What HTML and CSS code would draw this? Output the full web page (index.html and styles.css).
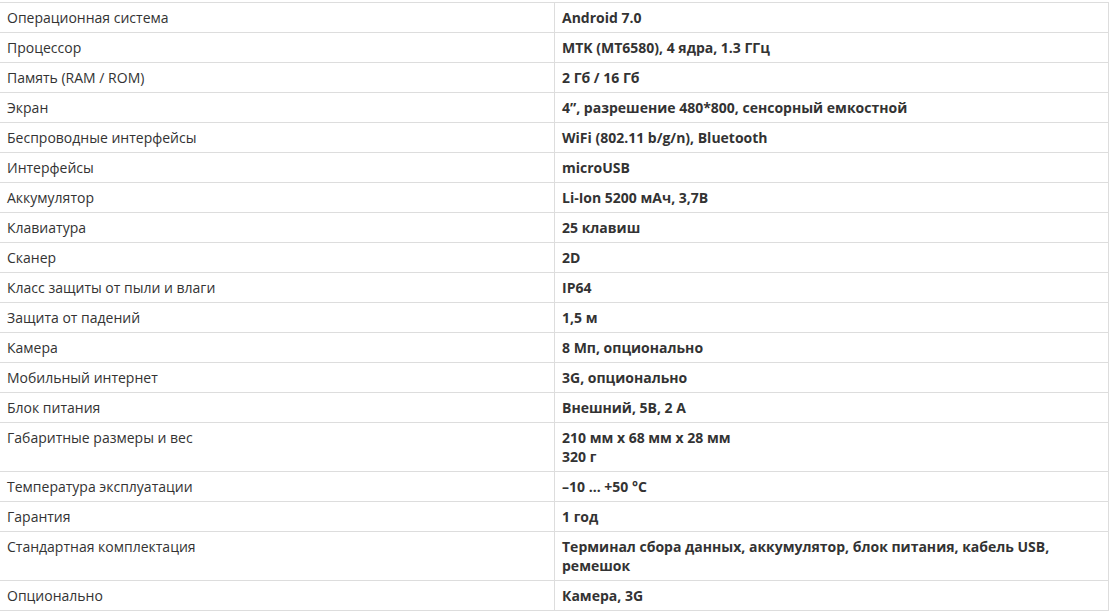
FILE: index.html
```html
<!DOCTYPE html>
<html lang="ru">
<head>
<meta charset="utf-8">
<link rel="stylesheet" href="styles.css">
</head>
<body>
<table class="specs">
<tbody>
<tr><td>Операционная система</td><td>Android 7.0</td></tr>
<tr><td>Процессор</td><td>MTK (MT6580), 4 ядра, 1.3 ГГц</td></tr>
<tr><td>Память (RAM / ROM)</td><td>2 Гб / 16 Гб</td></tr>
<tr><td>Экран</td><td>4”, разрешение 480*800, сенсорный емкостной</td></tr>
<tr><td>Беспроводные интерфейсы</td><td>WiFi (802.11 b/g/n), Bluetooth</td></tr>
<tr><td>Интерфейсы</td><td>microUSB</td></tr>
<tr><td>Аккумулятор</td><td>Li-Ion 5200 мАч, 3,7В</td></tr>
<tr><td>Клавиатура</td><td>25 клавиш</td></tr>
<tr><td>Сканер</td><td>2D</td></tr>
<tr><td>Класс защиты от пыли и влаги</td><td>IP64</td></tr>
<tr><td>Защита от падений</td><td>1,5 м</td></tr>
<tr><td>Камера</td><td>8 Мп, опционально</td></tr>
<tr><td>Мобильный интернет</td><td>3G, опционально</td></tr>
<tr><td>Блок питания</td><td>Внешний, 5В, 2 А</td></tr>
<tr><td>Габаритные размеры и вес</td><td>210 мм х 68 мм х 28 мм<br>320 г</td></tr>
<tr><td>Температура эксплуатации</td><td>–10 … +50 °С</td></tr>
<tr><td>Гарантия</td><td>1 год</td></tr>
<tr><td>Стандартная комплектация</td><td>Терминал сбора данных, аккумулятор, блок питания, кабель USB, ремешок</td></tr>
<tr><td>Опционально</td><td>Камера, 3G</td></tr>
</tbody>
</table>
</body>
</html>
```
FILE: styles.css
```css
html, body {
  margin: 0;
  padding: 0;
  background: #fff;
}
body {
  font-family: "Open Sans", "Liberation Sans", sans-serif;
  font-size: 14px;
  color: #333;
}
.specs {
  border-collapse: collapse;
  width: 1110px;
  margin: 2px 0 0 -1px;
  table-layout: fixed;
}
.specs td {
  border: 1px solid #ddd;
  padding: 5px 6px 5px 7px;
  line-height: 19px;
  vertical-align: top;
  text-align: left;
}
.specs td:first-child {
  width: 541px;
  font-weight: 400;
}
.specs td:last-child {
  font-weight: 700;
}
```
